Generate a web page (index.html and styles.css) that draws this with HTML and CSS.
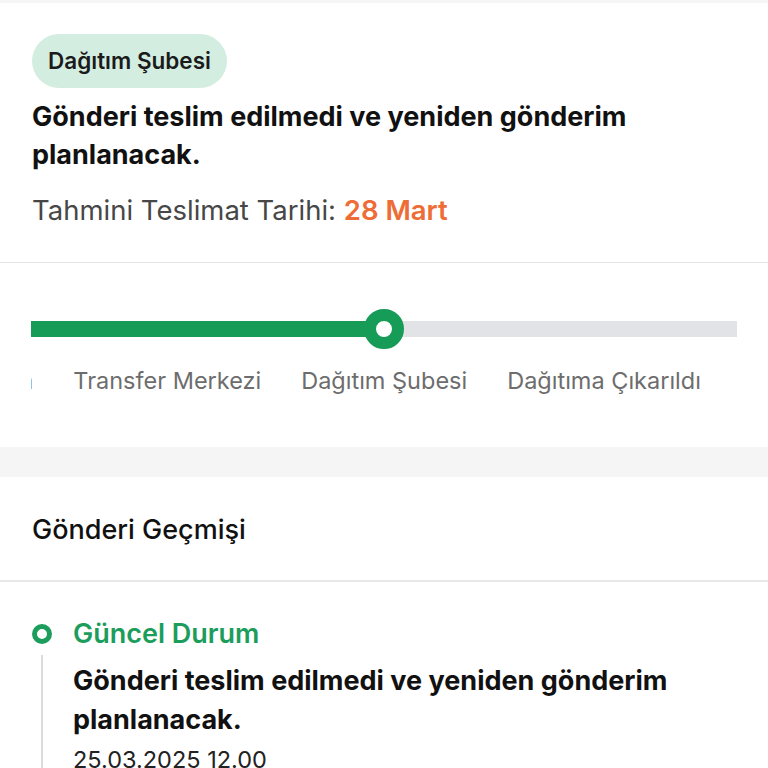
FILE: index.html
```html
<!DOCTYPE html>
<html lang="tr">

<head>
    <meta charset="UTF-8">
    <meta name="viewport" content="width=device-width, initial-scale=1.0">
    <title>Gönderi Takibi</title>
    <link rel="stylesheet" href="styles.css">
</head>

<body>
    <div class="top-gap"></div>

    <div class="card summary">
        <span class="badge">Dağıtım Şubesi</span>
        <p class="summary-title">Gönderi teslim edilmedi ve yeniden gönderim planlanacak.</p>
        <p class="eta">Tahmini Teslimat Tarihi: <span class="eta-date">28 Mart</span></p>
    </div>

    <div class="card progress">
        <div class="steps-scroll" id="steps-scroll">
            <div class="steps-inner">
                <div class="track">
                    <div class="track-fill" id="track-fill"></div>
                    <div class="track-dot" id="track-dot"></div>
                </div>
                <div class="steps">
                    <span class="step">Kargoya Verildi</span>
                    <span class="step">Yolda</span>
                    <span class="step">Transfer Merkezi</span>
                    <span class="step active">Dağıtım Şubesi</span>
                    <span class="step">Dağıtıma Çıkarıldı</span>
                    <span class="step">Teslim Edildi</span>
                </div>
            </div>
        </div>
    </div>

    <div class="card history">
        <div class="history-head">Gönderi Geçmişi</div>
        <div class="timeline">
            <div class="event">
                <div class="event-mark">
                    <span class="ring"></span>
                    <span class="stem"></span>
                </div>
                <div class="event-body">
                    <div class="event-status">Güncel Durum</div>
                    <div class="event-text">Gönderi teslim edilmedi ve yeniden gönderim planlanacak.</div>
                    <div class="event-date">25.03.2025 12.00</div>
                </div>
            </div>
        </div>
    </div>

    <script>
        // aktif adımı ortala ve çizgiyi doldur
        function placeActiveStep() {
            const scroll = document.getElementById('steps-scroll');
            const active = scroll.querySelector('.step.active');
            const center = active.offsetLeft + active.offsetWidth / 2;
            document.getElementById('track-fill').style.width = center + 'px';
            document.getElementById('track-dot').style.left = center + 'px';
            scroll.scrollLeft = center - scroll.clientWidth / 2;
        }
        placeActiveStep();
    </script>
</body>

</html>
```

FILE: styles.css
```css
body {
    font-family: Inter, 'Noto Sans', sans-serif;
    margin: 0;
    background-color: #f5f5f5;
    color: #111;
}

p {
    margin: 0;
}

.top-gap {
    height: 3px;
}

.card {
    background: white;
}

/* özet kartı */
.summary {
    padding: 31px 32px 35px;
    border-bottom: 1px solid #e4e4e4;
}

.badge {
    display: inline-block;
    padding: 0 16px;
    height: 54px;
    line-height: 54px;
    background-color: #d4ede1;
    border-radius: 27px;
    font-size: 22.5px;
    font-weight: 600;
    color: #1b1b1b;
}

.summary-title {
    margin-top: 10px;
    font-size: 27px;
    font-weight: 700;
    line-height: 38px;
    max-width: 660px;
}

.eta {
    margin-top: 19px;
    font-size: 27.5px;
    line-height: 34px;
    color: #474747;
}

.eta-date {
    color: #ee6c36;
    font-weight: 600;
}

/* ilerleme çubuğu */
.progress {
    padding: 46px 0 51px;
}

.steps-scroll {
    margin: 0 31px;
    overflow-x: auto;
    scrollbar-width: none;
}

.steps-inner {
    position: relative;
    display: inline-flex;
    flex-direction: column;
    gap: 17px;
    padding-right: 400px;
}

.track {
    position: relative;
    height: 40px;
}

.track::before {
    content: '';
    position: absolute;
    left: 0;
    right: -400px;
    top: 12px;
    height: 16px;
    background-color: #e1e3e6;
}

.track-fill {
    position: absolute;
    left: 0;
    top: 12px;
    height: 16px;
    background-color: #169c57;
}

.track-dot {
    position: absolute;
    top: 0;
    width: 16px;
    height: 16px;
    margin-left: -20px;
    border: 12px solid #169c57;
    border-radius: 50%;
    background: white;
}

.steps {
    display: flex;
    gap: 40px;
}

.step {
    white-space: nowrap;
    font-size: 23.5px;
    line-height: 30px;
    color: #6d6d6d;
}

/* gönderi geçmişi */
.history {
    margin-top: 30px;
    min-height: 400px;
}

.history-head {
    padding: 36px 32px 33px;
    font-size: 27px;
    font-weight: 500;
    line-height: 34px;
    border-bottom: 2px solid #e8e8e8;
}

.timeline {
    padding: 35px 32px 0;
}

.event {
    display: flex;
    gap: 21px;
}

.event-mark {
    display: flex;
    flex-direction: column;
    align-items: center;
    width: 20px;
    padding-top: 7px;
}

.ring {
    width: 10px;
    height: 10px;
    border: 5px solid #1c9d5c;
    border-radius: 50%;
}

.stem {
    flex: 1;
    width: 2px;
    margin-top: 11px;
    background-color: #dcdcdc;
}

.event-status {
    font-size: 27px;
    font-weight: 600;
    line-height: 34px;
    color: #1c9d5c;
}

.event-text {
    margin-top: 10px;
    font-size: 27px;
    font-weight: 700;
    line-height: 39px;
    max-width: 660px;
}

.event-date {
    margin-top: 6px;
    font-size: 23.5px;
    line-height: 30px;
    color: #222;
}
```
